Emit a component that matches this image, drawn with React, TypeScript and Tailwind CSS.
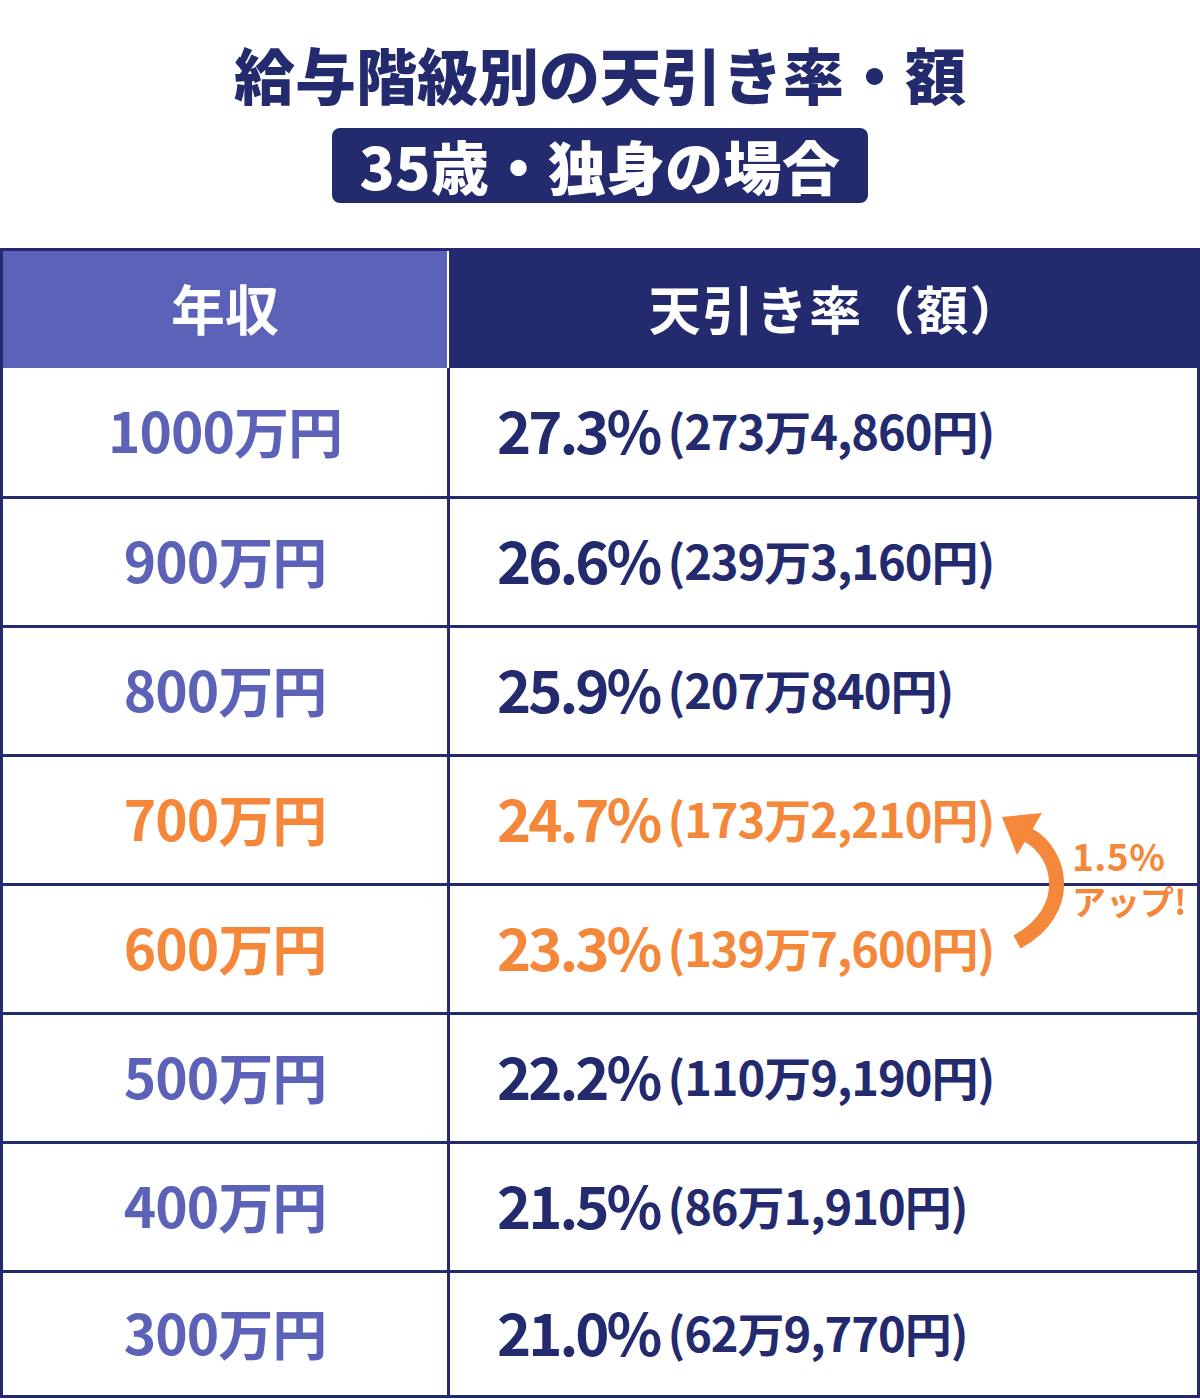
import React from "react";

const rows = [
  { inc: "1000万円", pct: "27.3%", amt: "(273万4,860円)", hi: false },
  { inc: "900万円", pct: "26.6%", amt: "(239万3,160円)", hi: false },
  { inc: "800万円", pct: "25.9%", amt: "(207万840円)", hi: false },
  { inc: "700万円", pct: "24.7%", amt: "(173万2,210円)", hi: true },
  { inc: "600万円", pct: "23.3%", amt: "(139万7,600円)", hi: true },
  { inc: "500万円", pct: "22.2%", amt: "(110万9,190円)", hi: false },
  { inc: "400万円", pct: "21.5%", amt: "(86万1,910円)", hi: false },
  { inc: "300万円", pct: "21.0%", amt: "(62万9,770円)", hi: false },
];

const heights = ["h-[128px]", "h-[129px]", "h-[129px]", "h-[129px]", "h-[129px]", "h-[129px]", "h-[129px]", "h-[125px]"];

export default function App() {
  return (
    <div
      className="relative w-[1200px] h-[1399px] bg-white overflow-hidden"
      style={{ fontFamily: '"Noto Sans CJK JP", "Noto Sans", sans-serif' }}
    >
      <div className="flex flex-col items-center pt-[43px]">
        <h1 className="text-[61px] leading-[62px] font-black text-[#232a6e] tracking-[0px]">
          給与階級別の天引き率・額
        </h1>
        <div className="mt-[23px] w-[536px] h-[75px] rounded-[8px] bg-[#232a6e] flex items-center justify-center">
          <span className="text-[58px] leading-[75px] font-black text-white tracking-[0.5px]">35歳・独身の場合</span>
        </div>
      </div>

      <div className="mt-[45px] border-[3px] border-[#232a6e] flex flex-col">
        <div className="flex h-[117px]">
          <div className="w-[444px] bg-[#5b62b8] flex items-center justify-center pb-[4px]">
            <span className="text-[54px] font-bold text-white leading-none">年収</span>
          </div>
          <div className="w-[2px] bg-white" />
          <div className="flex-1 bg-[#232a6e] flex items-center justify-center pl-[26px] pb-[4px]">
            <span className="text-[52px] font-bold text-white leading-none tracking-[1.5px]">天引き率（額）</span>
          </div>
        </div>
        {rows.map((r, i) => (
          <div
            key={r.inc}
            className={`flex ${heights[i]} ${i > 0 ? "border-t-[3px] border-[#232a6e]" : ""}`}
          >
            <div className="w-[444px] flex items-center justify-center pb-[6px]">
              <span
                className={`text-[55px] font-bold leading-none tracking-[-1px] ${
                  r.hi ? "text-[#f5873a]" : "text-[#5b62b8]"
                }`}
              >
                {r.inc}
              </span>
            </div>
            <div className="flex-1 border-l-[3px] border-[#232a6e] flex items-center pl-[47px] pb-[6px]">
              <span
                className={`text-[58px] font-bold leading-none tracking-[-3px] ${
                  r.hi ? "text-[#f5873a]" : "text-[#232a6e]"
                }`}
              >
                {r.pct}
              </span>
              <span
                className={`ml-[8px] text-[47px] font-bold leading-none tracking-[-1px] ${
                  r.hi ? "text-[#f5873a]" : "text-[#232a6e]"
                }`}
              >
                {r.amt}
              </span>
            </div>
          </div>
        ))}
      </div>

      <svg
        className="absolute left-[995px] top-[805px]"
        width="80"
        height="150"
        viewBox="0 0 80 150"
      >
        <path d="M33 30 C67 48 79 106 22 137" fill="none" stroke="#f5873a" strokeWidth="15" />
        <polygon points="7,12 47,8 22,50" fill="#f5873a" />
      </svg>
      <div className="absolute left-[1072px] top-[833px] font-bold text-[#f5873a]">
        <div className="text-[37px] leading-[45px] tracking-[0.5px]">1.5%</div>
        <div className="text-[34px] leading-[45px]">アップ!</div>
      </div>
    </div>
  );
}
